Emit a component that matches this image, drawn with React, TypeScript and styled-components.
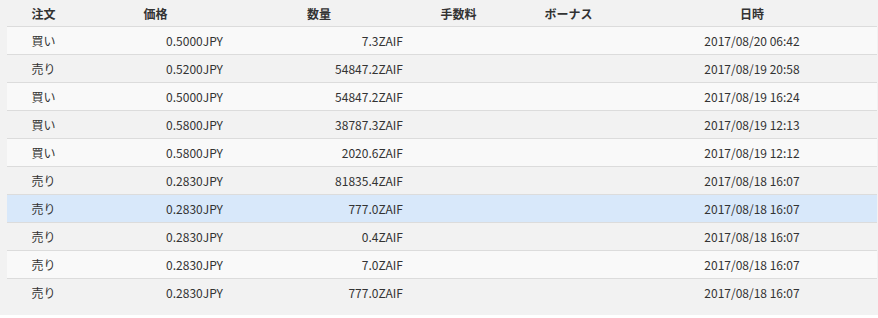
import React from "react";
import styled, { createGlobalStyle } from "styled-components";

const Global = createGlobalStyle`
  html, body { margin: 0; padding: 0; background: #ffffff; }
  body { font-family: "Noto Sans CJK JP", "Noto Sans", sans-serif; }
`;

const Panel = styled.div`
  background: #f2f2f2;
  padding: 0 1px 8px 7px;
  width: 878px;
  box-sizing: border-box;
`;

const COLS = "73px 151px 176px 103px 117px 250px";

const Grid = styled.div`
  display: grid;
  grid-template-columns: ${COLS};
`;

const HeaderRow = styled(Grid)`
  height: 26px;
  border-bottom: 1px solid #dcdcdc;
`;

const HeadCell = styled.div`
  display: flex;
  align-items: center;
  justify-content: center;
  font-size: 12px;
  font-weight: bold;
  color: #333;
`;

const Row = styled(Grid)<{ $tone: "light" | "dark" | "hover"; $last?: boolean }>`
  height: 27px;
  background: ${(p) =>
    p.$tone === "hover" ? "#d8e8fa" : p.$tone === "light" ? "#f9f9f9" : "#f2f2f2"};
  border-bottom: ${(p) => (p.$last ? "1px solid transparent" : "1px solid #dcdcdc")};
`;

const Cell = styled.div<{ $align?: "left" | "center" | "right"; $pr?: number }>`
  display: flex;
  align-items: center;
  justify-content: ${(p) =>
    p.$align === "right" ? "flex-end" : p.$align === "left" ? "flex-start" : "center"};
  padding-right: ${(p) => p.$pr ?? 0}px;
  font-size: 12px;
  color: #333;
  white-space: nowrap;
`;

const rows = [
  ["買い", "0.5000JPY", "7.3ZAIF", "2017/08/20 06:42"],
  ["売り", "0.5200JPY", "54847.2ZAIF", "2017/08/19 20:58"],
  ["買い", "0.5000JPY", "54847.2ZAIF", "2017/08/19 16:24"],
  ["買い", "0.5800JPY", "38787.3ZAIF", "2017/08/19 12:13"],
  ["買い", "0.5800JPY", "2020.6ZAIF", "2017/08/19 12:12"],
  ["売り", "0.2830JPY", "81835.4ZAIF", "2017/08/18 16:07"],
  ["売り", "0.2830JPY", "777.0ZAIF", "2017/08/18 16:07"],
  ["売り", "0.2830JPY", "0.4ZAIF", "2017/08/18 16:07"],
  ["売り", "0.2830JPY", "7.0ZAIF", "2017/08/18 16:07"],
  ["売り", "0.2830JPY", "777.0ZAIF", "2017/08/18 16:07"],
];

export default function App() {
  return (
    <>
      <Global />
      <Panel>
        <HeaderRow>
          <HeadCell>注文</HeadCell>
          <HeadCell>価格</HeadCell>
          <HeadCell>数量</HeadCell>
          <HeadCell>手数料</HeadCell>
          <HeadCell>ボーナス</HeadCell>
          <HeadCell>日時</HeadCell>
        </HeaderRow>
        {rows.map((r, i) => (
          <Row
            key={i}
            $tone={i === 6 ? "hover" : i % 2 === 0 ? "light" : "dark"}
            $last={i === rows.length - 1}
          >
            <Cell>{r[0]}</Cell>
            <Cell $align="right" $pr={8}>{r[1]}</Cell>
            <Cell $align="right" $pr={4}>{r[2]}</Cell>
            <Cell />
            <Cell />
            <Cell>{r[3]}</Cell>
          </Row>
        ))}
      </Panel>
    </>
  );
}
